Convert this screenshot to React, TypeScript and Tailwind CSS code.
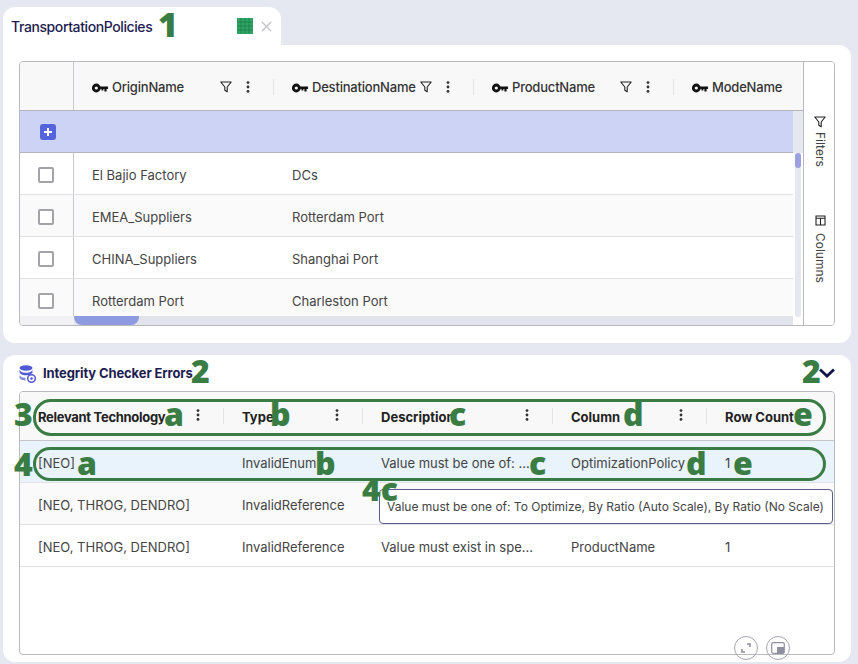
import { X } from "lucide-react";

const KeyIcon = () => (
  <svg width="16" height="10" viewBox="0 0 16 10" className="shrink-0">
    <circle cx="4.300" cy="5" r="3" fill="none" stroke="#111" strokeWidth="2.800" />
    <path d="M7 3.600h9v2.400h-1.400v2.400h-2.200V6h-1v1.600H9.500V6H7z" fill="#111" />
  </svg>
);

const FilterIcon = () => (
  <svg width="12" height="12" viewBox="0 0 12 12" className="shrink-0">
    <path d="M0.800 1h10.400L7.200 6v4.800L4.800 9.200V6z" fill="none" stroke="#222" strokeWidth="1.100" strokeLinejoin="round" />
  </svg>
);

const Kebab = () => (
  <svg width="4" height="12" viewBox="0 0 4 12" className="shrink-0">
    <circle cx="2" cy="1.600" r="1.400" fill="#333" />
    <circle cx="2" cy="6" r="1.400" fill="#333" />
    <circle cx="2" cy="10.400" r="1.400" fill="#333" />
  </svg>
);

const GridIcon = () => (
  <svg width="16" height="16" viewBox="0 0 16 16" className="shrink-0">
    <rect width="16" height="16" fill="#2fa565" />
    <path d="M4 0v16M8 0v16M12 0v16M0 4h16M0 8h16M0 12h16" stroke="#1d7d48" strokeWidth="0.700" />
  </svg>
);

const DbIcon = () => (
  <svg width="17" height="18" viewBox="0 0 17 18" className="shrink-0">
    <ellipse cx="7" cy="3" rx="6.500" ry="2.800" fill="#4f5bd5" />
    <path d="M0.500 5c1 2 4 2.800 6.500 2.800S12.500 7 13.500 5v2.500c-1 2-4 2.800-6.500 2.800S1.500 9.500 0.500 7.500z" fill="#4f5bd5" />
    <path d="M0.500 10c1 2 3.500 2.800 6 2.800v2.700c-3 0-5-1-6-2.500z" fill="#7f88df" />
    <circle cx="12.500" cy="13.500" r="3.800" fill="none" stroke="#4f5bd5" strokeWidth="1.500" />
    <circle cx="12.500" cy="13.500" r="1.300" fill="#4f5bd5" />
  </svg>
);

const ChevronIcon = () => (
  <svg width="16" height="10" viewBox="0 0 16 10" className="shrink-0">
    <path d="M1 1.500l7 6.500 7-6.500" fill="none" stroke="#16164a" strokeWidth="2.800" />
  </svg>
);

const ColumnsIcon = () => (
  <svg width="11" height="11" viewBox="0 0 11 11" className="shrink-0">
    <path d="M1 1h9v9H1zM1 3.300h9M5.500 3.300V10" fill="none" stroke="#222" strokeWidth="1.100" />
  </svg>
);

// annotation drawn on top of the screenshot
const Mark = ({ text, className }: { text: string; className: string }) => (
  <span className={`absolute font-['Open_Sans',sans-serif] font-extrabold leading-none text-[#3a7d44] ${className}`}>
    {text}
  </span>
);

const HeadCell = ({ title }: { title: string }) => (
  <div className="flex items-center w-[200px] shrink-0 pl-[18px] pt-[4px]">
    <KeyIcon />
    <span className="ml-1 text-[13px] font-medium tracking-[-0.2px] text-[#333]">{title}</span>
    <div className="flex items-center ml-auto gap-[14px] -mt-[3px]">
      <FilterIcon />
      <Kebab />
      <div className="w-px h-4 bg-[#e4e4e8] ml-[9px]" />
    </div>
  </div>
);

const topRows = [
  ["El Bajio Factory", "DCs", "bg-white"],
  ["EMEA_Suppliers", "Rotterdam Port", "bg-[#fafafa]"],
  ["CHINA_Suppliers", "Shanghai Port", "bg-white"],
  ["Rotterdam Port", "Charleston Port", "bg-[#fafafa]"],
];

const TopTable = () => (
  <div className="flex h-[265px] border border-[#b9b9c0] rounded-sm overflow-hidden">
    <div className="flex-1 min-w-0 flex flex-col overflow-hidden">
      <div className="flex h-[49px] shrink-0 bg-[#f8f8f8] border-b border-[#b5b5bb] overflow-hidden">
        <div className="w-[54px] shrink-0 border-r border-[#c8c8ce]" />
        <HeadCell title="OriginName" />
        <HeadCell title="DestinationName" />
        <HeadCell title="ProductName" />
        <div className="flex items-center shrink-0 pl-[18px] pt-[4px]">
          <KeyIcon />
          <span className="ml-1 text-[13px] font-medium tracking-[-0.2px] text-[#333]">ModeName</span>
        </div>
      </div>
      <div className="flex flex-1 min-h-0">
        <div className="flex-1 min-w-0 flex flex-col">
          <div className="h-[42px] shrink-0 flex items-center bg-[#ccd3f5] border-b border-[#b5b5bb]">
            <div className="w-[54px] flex justify-center pl-[2px]">
              <div className="w-4 h-4 rounded-[3px] bg-[#5563dc] flex items-center justify-center text-white">
                <svg width="10" height="10" viewBox="0 0 10 10">
                  <path d="M5 1v8M1 5h8" stroke="#fff" strokeWidth="2" />
                </svg>
              </div>
            </div>
          </div>
          <div className="flex-1 min-h-0 overflow-hidden">
            {topRows.map(([origin, dest, bg]) => (
              <div key={origin} className={`flex h-[42px] items-center border-b border-[#e2e2e6] text-[13px] text-[#444] ${bg}`}>
                <div className="w-[54px] h-full shrink-0 flex items-center justify-center border-r border-[#c8c8ce] pr-[2px] pt-[2px]">
                  <div className="w-4 h-4 border-2 border-[#a3a3a8] rounded-[2px] bg-white" />
                </div>
                <div className="w-[200px] pl-[18px] pt-[5px]">{origin}</div>
                <div className="pl-[18px] pt-[5px]">{dest}</div>
              </div>
            ))}
          </div>
          <div className="h-[9px] shrink-0 flex bg-[#e2e4ec] -mt-px">
            <div className="w-[54px] bg-[#f2f2f4]" />
            <div className="w-[65px] bg-[#8f9be0] rounded-b-lg" />
          </div>
        </div>
        <div className="w-[10px] shrink-0 bg-white flex flex-col">
          <div className="h-[42px] bg-[#e6e8f0] shrink-0" />
          <div className="flex-1 mx-[2px] mb-2 rounded bg-[#e6e8f0]">
            <div className="h-[15px] rounded bg-[#9aa0e0]" />
          </div>
        </div>
      </div>
    </div>
    <div className="w-[31px] shrink-0 border-l border-[#b9b9c0] bg-white flex flex-col items-center pt-[54px] pl-[2px] text-[12px] text-[#444]">
      <div className="flex items-center gap-[4px] [writing-mode:vertical-rl]">
        <FilterIcon />
        <span>Filters</span>
      </div>
      <div className="flex items-center gap-[7px] mt-[48px] [writing-mode:vertical-rl]">
        <ColumnsIcon />
        <span>Columns</span>
      </div>
    </div>
  </div>
);

const columns = [
  { title: "Relevant Technology", width: "w-[204px]", track: "tracking-[-0.3px]" },
  { title: "Type", width: "w-[139px]", track: "" },
  { title: "Description", width: "w-[190px]", track: "" },
  { title: "Column", width: "w-[154px]", track: "" },
  { title: "Row Count", width: "w-[128px]", track: "" },
];

const errorRows = [
  { cells: ["[NEO]", "InvalidEnum", "Value must be one of: ...", "OptimizationPolicy", "1"], bg: "bg-[#e8f3fb]" },
  { cells: ["[NEO, THROG, DENDRO]", "InvalidReference", "Value must exist in spe...", "ProductName", "1"], bg: "bg-[#fafafa]" },
  { cells: ["[NEO, THROG, DENDRO]", "InvalidReference", "Value must exist in spe...", "ProductName", "1"], bg: "bg-white" },
];

const ErrorsTable = () => (
  <div className="h-[264px] border border-[#b9b9c0] rounded-sm overflow-hidden bg-white">
    <div className="flex h-[49px] bg-[#f8f8f8] border-b border-[#c4c4ca]">
      {columns.map((col, i) => (
        <div key={col.title} className={`flex items-center shrink-0 pl-[18px] pr-[23px] ${col.width}`}>
          <span className={`text-[13px] font-bold text-[#222] pt-[3px] ${col.track}`}>{col.title}</span>
          {i < 4 && (
            <div className="flex items-center ml-auto -mt-0.5">
              <Kebab />
            </div>
          )}
          {i < 4 && <div className="w-px h-4 bg-[#e4e4e8] ml-[23px] -mr-[23px]" />}
        </div>
      ))}
    </div>
    {errorRows.map((row, r) => (
      <div key={r} className={`flex h-[42px] items-center border-b border-[#e2e2e6] text-[13px] text-[#444] ${row.bg}`}>
        {row.cells.map((cell, i) => (
          <div key={i} className={`shrink-0 pl-[18px] pt-[5px] ${columns[i].width}`}>
            {cell}
          </div>
        ))}
      </div>
    ))}
  </div>
);

export default function App() {
  return (
    <div className="relative h-[664px] w-[858px] overflow-hidden bg-[#e5e8f0] pl-[3px] pr-[7px] pt-[7px] font-['Inter',sans-serif]">
      <div className="flex items-center h-[38px] w-[278px] bg-white rounded-t-xl pl-2 pr-[6px]">
        <span className="text-[14px] font-medium text-[#1d1d4f] tracking-[-0.4px]">TransportationPolicies</span>
        <div className="flex items-center ml-auto gap-[5px]">
          <GridIcon />
          <X size={17} className="text-[#c4c4c8]" />
        </div>
      </div>
      <div className="bg-white rounded-b-xl rounded-tr-xl h-[298px] px-4 pt-4">
        <TopTable />
      </div>
      <div className="bg-white rounded-xl h-[307px] mt-3 px-4">
        <div className="flex items-center justify-between h-9">
          <div className="flex items-center gap-[7px] pt-[2px]">
            <DbIcon />
            <span className="text-[13px] font-bold text-[#1d1d4f] tracking-[-0.12px]">Integrity Checker Errors</span>
          </div>
          <ChevronIcon />
        </div>
        <ErrorsTable />
      </div>

      <div className="absolute left-[379px] top-[489px] w-[454px] h-[35px] flex items-center pl-[7px] bg-white border border-[#5a5e8c] rounded text-[12px] text-[#444] whitespace-nowrap">
        Value must be one of: To Optimize, By Ratio (Auto Scale), By Ratio (No Scale)
      </div>

      <div className="absolute left-[33px] top-[399px] w-[793px] h-[37px] rounded-[18px] border-[3px] border-[#3a7d44]" />
      <div className="absolute left-[33px] top-[447px] w-[793px] h-[34px] rounded-[17px] border-[3px] border-[#3a7d44]" />

      <Mark text="1" className="left-[158px] top-[7px] text-[34px]" />
      <Mark text="2" className="left-[191px] top-[355px] text-[32px]" />
      <Mark text="2" className="left-[802px] top-[355px] text-[32px]" />
      <Mark text="3" className="left-[14px] top-[398px] text-[32px]" />
      <Mark text="4" className="left-[14px] top-[448px] text-[32px]" />
      <Mark text="a" className="left-[164px] top-[398px] text-[32px]" />
      <Mark text="b" className="left-[270px] top-[398px] text-[32px]" />
      <Mark text="c" className="left-[449px] top-[398px] text-[32px]" />
      <Mark text="d" className="left-[623px] top-[398px] text-[32px]" />
      <Mark text="e" className="left-[793px] top-[398px] text-[32px]" />
      <Mark text="a" className="left-[77px] top-[447px] text-[32px]" />
      <Mark text="b" className="left-[315px] top-[447px] text-[32px]" />
      <Mark text="c" className="left-[529px] top-[447px] text-[32px]" />
      <Mark text="d" className="left-[686px] top-[447px] text-[32px]" />
      <Mark text="e" className="left-[733px] top-[447px] text-[32px]" />
      <Mark text="4c" className="left-[362px] top-[473px] text-[32px]" />

      <div className="absolute left-[734px] top-[636px] w-6 h-6 rounded-full border-[1.5px] border-[#a5a5b0] flex items-center justify-center">
        <svg width="12" height="12" viewBox="0 0 12 12">
          <path d="M7 2h3v3M5 10H2V7" fill="none" stroke="#8f8fa0" strokeWidth="1.600" />
        </svg>
      </div>
      <div className="absolute left-[766px] top-[636px] w-6 h-6 rounded-full border-[1.5px] border-[#a5a5b0] flex items-center justify-center">
        <svg width="14" height="12" viewBox="0 0 14 12">
          <rect x="0.700" y="0.700" width="12.600" height="10.600" rx="1.500" fill="none" stroke="#8f8fa0" strokeWidth="1.200" />
          <rect x="6" y="5" width="7" height="6" fill="#8f8fa0" />
        </svg>
      </div>
    </div>
  );
}
